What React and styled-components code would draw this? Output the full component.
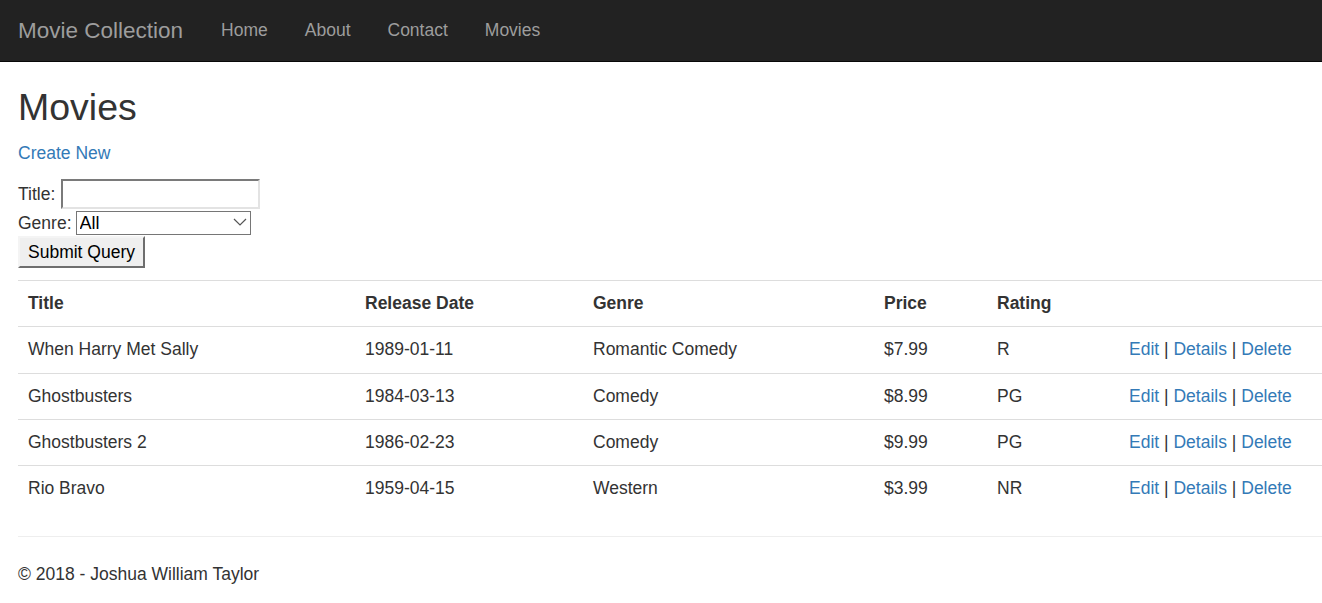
import styled, { createGlobalStyle } from "styled-components";

const GlobalStyle = createGlobalStyle`
  html, body {
    margin: 0;
    padding: 0;
    background: #ffffff;
  }
  body {
    font-family: "Liberation Sans", Arial, Helvetica, sans-serif;
    font-size: 17.5px;
    line-height: 25px;
    color: #333333;
  }
  * {
    box-sizing: border-box;
  }
`;

const Navbar = styled.nav`
  height: 62px;
  background-color: #222222;
  border-bottom: 1px solid #080808;
  display: flex;
  align-items: center;
  padding-left: 18px;
`;

const Brand = styled.a`
  font-size: 22.5px;
  color: #9d9d9d;
  text-decoration: none;
  margin-right: 38px;
`;

const NavList = styled.ul`
  display: flex;
  gap: 37px;
  list-style: none;
  margin: 0;
  padding: 0;
`;

const NavLink = styled.a`
  font-size: 17.5px;
  color: #9d9d9d;
  text-decoration: none;
`;

const Main = styled.main`
  padding-left: 18px;
`;

const Heading = styled.h2`
  font-size: 37.5px;
  font-weight: 500;
  line-height: 41px;
  margin: 25px 0 12.5px;
  color: #333333;
`;

const Link = styled.a`
  color: #337ab7;
  text-decoration: none;
`;

const Paragraph = styled.p`
  margin: 0 0 12.5px;
`;

const SearchForm = styled.form`
  display: flex;
  flex-direction: column;
  align-items: flex-start;
  margin-bottom: 12px;
`;

const FieldRow = styled.label`
  display: flex;
  align-items: center;
  height: ${(p) => p.$h}px;
  gap: 4px;
`;

const TextInput = styled.input`
  width: 199px;
  height: 30px;
  margin-left: 2px;
  border-style: solid;
  border-width: 2px;
  border-color: #7a7a7a #e3e3e3 #e3e3e3 #7a7a7a;
  font-family: inherit;
  font-size: 17px;
  padding: 1px 3px;
  background: #fff;
`;

const SelectWrap = styled.span`
  position: relative;
  display: inline-flex;
`;

const Select = styled.select`
  appearance: none;
  width: 175px;
  height: 24px;
  border: 1px solid #767676;
  border-radius: 0;
  background: #ffffff;
  font-family: inherit;
  font-size: 18px;
  color: #000000;
  padding: 0 0 0 3px;
  line-height: 22px;
`;

const Chevron = styled.svg`
  position: absolute;
  right: 4px;
  top: 7px;
  pointer-events: none;
`;

const SubmitButton = styled.button`
  width: 127px;
  height: 32px;
  background: #efefef;
  border-style: solid;
  border-width: 2px;
  border-color: #f4f4f4 #6e6e6e #6e6e6e #f4f4f4;
  font-family: inherit;
  font-size: 17.5px;
  color: #000000;
  padding: 0;
`;

const Table = styled.table`
  width: 1304px;
  table-layout: fixed;
  border-collapse: collapse;
  border-spacing: 0;
  margin-bottom: 25px;
`;

const Cell = styled.td`
  padding: 10px 10px 10.25px;
  line-height: 25px;
  border-top: 1px solid #dddddd;
  text-align: left;
  vertical-align: top;
  white-space: nowrap;
`;

const HeadCell = styled(Cell).attrs({ as: "th" })`
  font-weight: 700;
`;

const Sep = styled.span`
  color: #333333;
`;

const Rule = styled.hr`
  border: 0;
  border-top: 1px solid #eeeeee;
  margin: 0 0 25px;
`;

const Footer = styled.footer`
  p {
    margin: 0;
  }
`;

const movies = [
  { title: "When Harry Met Sally", date: "1989-01-11", genre: "Romantic Comedy", price: "$7.99", rating: "R" },
  { title: "Ghostbusters", date: "1984-03-13", genre: "Comedy", price: "$8.99", rating: "PG" },
  { title: "Ghostbusters 2", date: "1986-02-23", genre: "Comedy", price: "$9.99", rating: "PG" },
  { title: "Rio Bravo", date: "1959-04-15", genre: "Western", price: "$3.99", rating: "NR" },
];

const widths = [337, 228, 291, 113, 132, 203];

function App() {
  return (
    <>
      <GlobalStyle />
      <Navbar>
        <Brand href="#">Movie Collection</Brand>
        <NavList>
          <li><NavLink href="#">Home</NavLink></li>
          <li><NavLink href="#">About</NavLink></li>
          <li><NavLink href="#">Contact</NavLink></li>
          <li><NavLink href="#">Movies</NavLink></li>
        </NavList>
      </Navbar>
      <Main>
        <Heading>Movies</Heading>
        <Paragraph>
          <Link href="#">Create New</Link>
        </Paragraph>
        <SearchForm onSubmit={(e) => e.preventDefault()}>
          <FieldRow $h={32}>
            Title: <TextInput type="text" />
          </FieldRow>
          <FieldRow $h={26}>
            Genre:
            <SelectWrap>
              <Select defaultValue="All">
                <option>All</option>
                <option>Comedy</option>
                <option>Romantic Comedy</option>
                <option>Western</option>
              </Select>
              <Chevron width="14" height="9" viewBox="0 0 14 9">
                <path d="M1 1 L7 7 L13 1" fill="none" stroke="#555" strokeWidth="1.2" />
              </Chevron>
            </SelectWrap>
          </FieldRow>
          <SubmitButton type="submit">Submit Query</SubmitButton>
        </SearchForm>
        <Table>
          <colgroup>
            {widths.map((w, i) => (
              <col key={i} style={{ width: w }} />
            ))}
          </colgroup>
          <tbody>
            <tr>
              <HeadCell>Title</HeadCell>
              <HeadCell>Release Date</HeadCell>
              <HeadCell>Genre</HeadCell>
              <HeadCell>Price</HeadCell>
              <HeadCell>Rating</HeadCell>
              <HeadCell></HeadCell>
            </tr>
            {movies.map((m) => (
              <tr key={m.title}>
                <Cell>{m.title}</Cell>
                <Cell>{m.date}</Cell>
                <Cell>{m.genre}</Cell>
                <Cell>{m.price}</Cell>
                <Cell>{m.rating}</Cell>
                <Cell>
                  <Link href="#">Edit</Link> <Sep>|</Sep> <Link href="#">Details</Link>{" "}
                  <Sep>|</Sep> <Link href="#">Delete</Link>
                </Cell>
              </tr>
            ))}
          </tbody>
        </Table>
        <Rule />
        <Footer>
          <p>© 2018 - Joshua William Taylor</p>
        </Footer>
      </Main>
    </>
  );
}

export default App;
